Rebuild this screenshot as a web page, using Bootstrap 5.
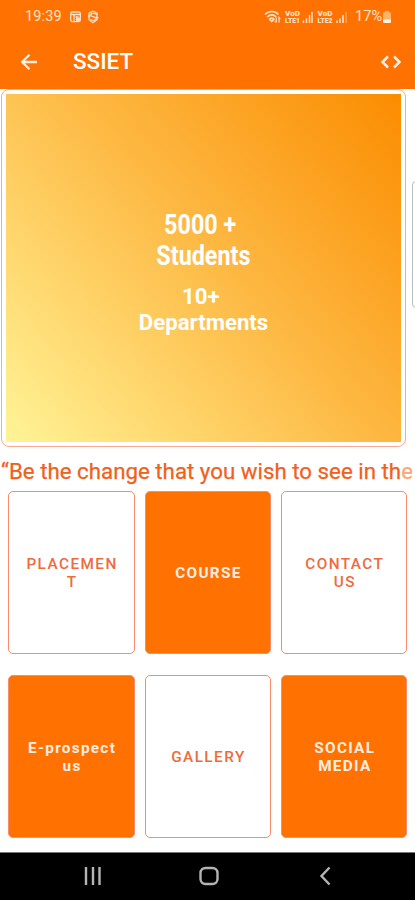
<!DOCTYPE html>
<html lang="en">
<head>
<meta charset="utf-8">
<meta name="viewport" content="width=device-width, initial-scale=1">
<title>SSIET</title>
<link href="https://cdn.jsdelivr.net/npm/bootstrap@5.3.0/dist/css/bootstrap.min.css" rel="stylesheet">
<style>
body{font-family:Roboto,"Liberation Sans",sans-serif;background:#fff;height:900px;overflow:hidden}
.app-head{background:#ff7100;height:89px;color:#fff}
.status{height:33px;padding:0 23px 0 25px;font-size:14.5px;color:#ffe4cf}
#clock{letter-spacing:.15px}
.toolbar{height:56px;padding:1px 13px 0 20px}
.app-title{font-size:22.5px;font-weight:500;margin-left:34px;line-height:1}
.hero{height:358px;width:405px;border:1px solid #fba893;border-radius:8px;padding:4px;margin-left:1px}
.hero-fill{background:linear-gradient(49deg,#fff497 0%,#ffd971 24%,#fdb842 54%,#fb8c00 100%);color:#fff;font-weight:700;text-align:center;padding-top:116px}
.big{font-size:27px;line-height:31px}
.mid{font-size:22.2px;line-height:26px;margin-top:11px}
.squeeze{display:inline-block;transform:scaleX(.865)}
.ticker{height:44px;padding:2px 0 0 1px;width:412px;font-size:22.3px;line-height:44px;color:#f2601a;-webkit-text-stroke:.25px currentColor;overflow:hidden}
.ticker .fade-end{color:#f9a878}
.tiles{display:grid;grid-template-columns:repeat(3,1fr);column-gap:10px;row-gap:21px;padding:0 7.5px 0 8.400px}
.tile{height:163px;border:1px solid #f98c6d;border-radius:5px;font-size:15.3px;line-height:18px;letter-spacing:1.45px;font-weight:500;padding:1px 15px 0 16px;color:#ef6a3c;background:#fff;word-break:break-word}
.tile.solid{background:#ff7100;color:#ffeee2;font-weight:700;letter-spacing:1.3px}
.sysnav{height:48px;background:#000;border-top:1px solid #777}
.edge{position:absolute;left:412px;top:181px;width:12px;height:127px;border:1px solid #b9bcc2;border-radius:4px;background:#fff}
</style>
<script src="https://cdn.jsdelivr.net/npm/bootstrap@5.3.0/dist/js/bootstrap.bundle.min.js"></script>
</head>
<body class="d-flex flex-column position-relative">
<header class="app-head flex-shrink-0">
  <div class="status d-flex align-items-center justify-content-between">
    <div class="d-flex align-items-center">
      <span id="clock">19:39</span>
      <svg class="ms-2" width="32" height="14" viewBox="0.5 0 32 14" fill="none" stroke="#ffe0c8" stroke-width="1.3"><rect x="1.2" y="2" width="9.6" height="9.6" rx="1.5"/><path d="M1.500 4.500h9M4.500 4v7M6 7h3"/><circle cx="8.500" cy="9.500" r="2.300" fill="#ffe0c8" stroke="none"/><path d="M23.500 1.200l4 2v6.500l-4 3-4-3V3.200zM27 4.500c-2-1.500-5-1.500-6 .5 0 2 5.500 1.500 5.500 4-1 1.800-4 1.500-5.500.3M18.500 6h2.500M26 7.500h3"/></svg>
    </div>
    <div class="d-flex align-items-center">
      <svg width="91" height="16" viewBox="0 0 91 16" fill="none" stroke="#ffe0c8"><path d="M1 5.500c4-4 10-4 13.500 0M3.200 8c3-2.800 6.500-2.800 9 0M5.500 10.200c1.500-1.500 3-1.500 4.500 0l-2.200 2.200z" stroke-width="1.600"/><path d="M12.300 8.500v5M10.800 12l1.500 1.500M15 13.500v-5l1.200 1.500" stroke-width="1.200"/><g font-family="Roboto" font-size="7" font-weight="900" fill="#ffe0c8" stroke="none"><text x="21" y="7.200" textLength="15" lengthAdjust="spacingAndGlyphs">VoD</text><text x="21" y="13.700" textLength="15" lengthAdjust="spacingAndGlyphs">LTE1</text><text x="53.500" y="7.200" textLength="15" lengthAdjust="spacingAndGlyphs">VoD</text><text x="53.500" y="13.700" textLength="15" lengthAdjust="spacingAndGlyphs">LTE2</text></g><path d="M39.500 11.500v2.500M42.500 9.500V14M45.500 6v8M48 3v11" stroke-width="1.500"/><path d="M73 11.500v2.500M76 9.500V14M79 6v8" stroke-width="1.600"/><path d="M82 3v11" stroke-width="1.500" opacity=".5"/></svg>
      <span id="pct">17%</span>
      <svg width="10" height="14" viewBox="0 0 10 14"><path d="M1 4q0-2 2-2V1h4v1q2 0 2 2v6H1z" fill="#ffb46b"/><path d="M1 9.500h8V12q0 1-1 1H2q-1 0-1-1z" fill="#fff0e0"/></svg>
    </div>
  </div>
  <div class="toolbar d-flex align-items-center">
    <svg width="19" height="18" viewBox="0 0 19 18" fill="none" stroke="#fff0e4" stroke-width="2.300"><path d="M17 9H2.500M9.500 1.800L2.200 9l7.300 7.200"/></svg>
    <span class="app-title">SSIET</span>
    <svg class="ms-auto" width="22" height="14" viewBox="0 1 22 14" fill="none" stroke="#fff0e4" stroke-width="2.500"><path d="M8 2.500L2.500 8 8 13.500M14 2.500L19.500 8 14 13.500"/></svg>
  </div>
</header>
<main class="flex-grow-1">
  <section class="hero">
    <div class="hero-fill h-100">
      <div class="big"><span class="squeeze">5000 +&nbsp;</span><br><span class="squeeze">Students</span></div>
      <div class="mid">10+&nbsp;<br>Departments</div>
    </div>
  </section>
  <div class="ticker text-nowrap"><span id="quote">“Be the change that you wish to see in th<span class="fade-end">e</span></span></div>
  <section class="tiles">
    <div class="tile d-flex align-items-center justify-content-center text-center">PLACEMENT</div>
    <div class="tile solid d-flex align-items-center justify-content-center text-center">COURSE</div>
    <div class="tile d-flex align-items-center justify-content-center text-center">CONTACT US</div>
    <div class="tile solid d-flex align-items-center justify-content-center text-center">E-prospect<br>us</div>
    <div class="tile d-flex align-items-center justify-content-center text-center">GALLERY</div>
    <div class="tile solid d-flex align-items-center justify-content-center text-center">SOCIAL MEDIA</div>
  </section>
</main>
<div class="edge"></div>
<nav class="sysnav flex-shrink-0 d-flex align-items-center justify-content-center">
  <svg width="415" height="47" viewBox="0 0 415 47" fill="none" stroke="#b4b4b4" stroke-width="2.400"><path d="M86 14v18M93 14v18M99.500 14v18"/><rect x="200.500" y="15" width="17" height="16" rx="5"/><path d="M329.500 14.500L321.500 23l8 8.500"/></svg>
</nav>
</body>
</html>
